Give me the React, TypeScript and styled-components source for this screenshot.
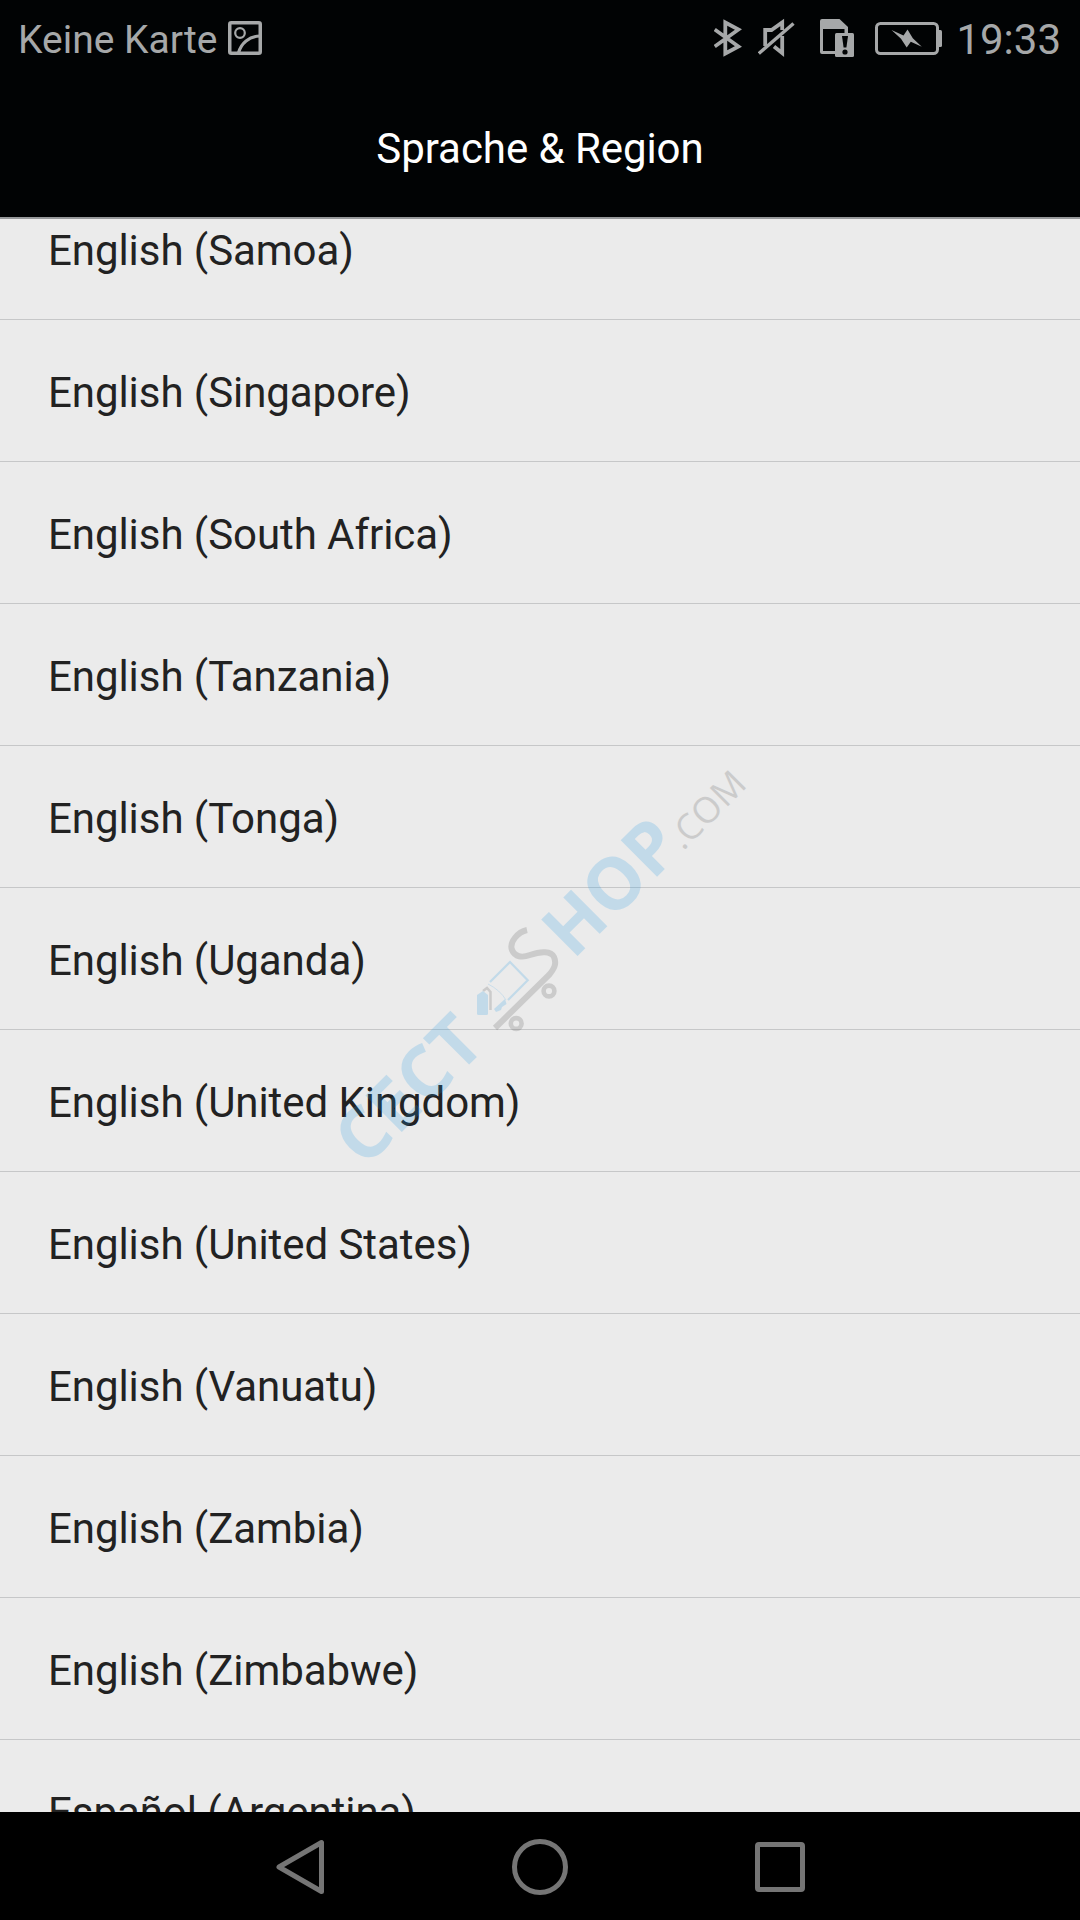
import React from "react";
import styled, { createGlobalStyle } from "styled-components";

const GlobalStyle = createGlobalStyle`
  * { box-sizing: border-box; }
  body { margin: 0; background: #000; }
`;

const Screen = styled.div`
  position: relative;
  display: flex;
  flex-direction: column;
  width: 1080px;
  height: 1920px;
  overflow: hidden;
  background: #000;
  font-family: Roboto, "Noto Sans", sans-serif;
`;

const Header = styled.header`
  display: flex;
  flex-direction: column;
  flex: none;
  height: 219px;
  background: #010304;
  border-bottom: 2px solid #97999b;
`;

const StatusBar = styled.div`
  display: flex;
  align-items: center;
  justify-content: space-between;
  height: 76px;
  padding: 0 18px 0 18px;
  color: #a6a8a9;
`;

const StatusGroup = styled.div`
  display: flex;
  align-items: center;
`;

const Carrier = styled.span`
  font-size: 39px;
  line-height: 76px;
  padding-top: 4px;
  width: 210px;
  white-space: nowrap;
`;

const Clock = styled.span`
  font-size: 42px;
  line-height: 76px;
  padding-top: 4px;
  margin-left: 11px;
  margin-right: 1px;
  width: 108px;
  text-align: right;
  white-space: nowrap;
`;

const StatusIcon = styled.svg<{ $gap?: number }>`
  display: block;
  flex: none;
  margin-left: ${(p) => p.$gap ?? 0}px;
`;

const Title = styled.h1`
  margin: 0;
  padding-top: 4px;
  text-align: center;
  font-size: 42px;
  font-weight: 400;
  letter-spacing: -0.06px;
  line-height: 138px;
  color: #fff;
`;

const List = styled.ul`
  display: flex;
  flex-direction: column;
  justify-content: flex-start;
  flex: none;
  height: 1593px;
  margin: 0;
  padding: 0;
  list-style: none;
  overflow: hidden;
  background: #ebebeb;
`;

const Row = styled.li<{ $scrolled?: boolean }>`
  flex: none;
  height: 142px;
  margin-top: ${(p) => (p.$scrolled ? "-41px" : "0")};
  padding: 2px 48px 0;
  border-bottom: 1px solid #c6c7c8;
  font-size: 42px;
  letter-spacing: -0.06px;
  line-height: 141px;
  color: #222;
  white-space: nowrap;
`;

const NavBar = styled.nav`
  display: flex;
  justify-content: center;
  align-items: center;
  flex: 1;
  gap: 180px;
  padding-top: 2px;
  background: #000;
`;

const NavButton = styled.button`
  display: flex;
  padding: 0;
  border: 0;
  background: none;
`;

const Watermark = styled.svg`
  position: absolute;
  left: 260px;
  top: 700px;
  pointer-events: none;
`;

const languages = [
  "English (Samoa)",
  "English (Singapore)",
  "English (South Africa)",
  "English (Tanzania)",
  "English (Tonga)",
  "English (Uganda)",
  "English (United Kingdom)",
  "English (United States)",
  "English (Vanuatu)",
  "English (Zambia)",
  "English (Zimbabwe)",
  "Español (Argentina)",
];

const PictureIcon = () => (
  <StatusIcon width="34" height="34" viewBox="228 20 34 34" fill="none" stroke="#a6a8a9">
    <rect x="229.75" y="21.75" width="30.5" height="30.5" rx="1.5" strokeWidth="3.5" />
    <circle cx="240" cy="32" r="4.8" strokeWidth="2.2" />
    <path d="M238.5 52C241 42 249 35.5 260 35" strokeWidth="3.2" />
  </StatusIcon>
);

const BluetoothIcon = () => (
  <StatusIcon width="28" height="40" viewBox="714 17 28 40" fill="none" stroke="#a6a8a9" strokeWidth="3.8">
    <path d="M714.7 28.5L738.5 45.5L725.3 52.5V21.5L738.5 28.5L714.7 45.5" />
  </StatusIcon>
);

const MutedIcon = () => (
  <StatusIcon $gap={16} width="37" height="40" viewBox="758 17 37 40" fill="none" stroke="#a6a8a9" strokeWidth="3.8">
    <path d="M765.2 45V29H771.5L782.2 21.5V29" />
    <path d="M782.2 35V52L774 45.5" />
    <path d="M758.8 52.5L793.5 22.5" strokeWidth="3.4" />
  </StatusIcon>
);

const SimAlertIcon = () => (
  <StatusIcon $gap={25} width="34" height="40" viewBox="820 17 34 40">
    <path d="M820 20Q820 18 822 18H839.5L848 26V32H844.5V28H823V50H835V53H822Q820 53 820 51Z" fill="#a6a8a9" />
    <rect x="835" y="32" width="19" height="24" rx="1.5" fill="#a6a8a9" />
    <path d="M842 35H848L846.4 46.5H843.6Z" fill="#010304" />
    <circle cx="845" cy="51" r="2.6" fill="#010304" />
  </StatusIcon>
);

const BatteryIcon = () => (
  <StatusIcon $gap={21} width="67" height="33" viewBox="875 22 67 33">
    <rect x="876.5" y="23.5" width="61" height="30" rx="4" fill="none" stroke="#a6a8a9" strokeWidth="3" />
    <path d="M938 30H940.5Q942 30 942 31.5V45.5Q942 47 940.5 47H938Z" fill="#a6a8a9" />
    <path d="M891.5 30L903.5 35.5L907.5 29.5L912.8 38.3L921.8 46.8L910.8 41.8L906.7 47.5L901 38.8Z" fill="#a6a8a9" />
  </StatusIcon>
);

const BLUE = "#239be6";
const GRAY = "#505050";

const ShopWatermark = () => (
  <Watermark width="560" height="540" viewBox="260 700 560 540">
    <g opacity="0.2" fontFamily="'Open Sans', 'Noto Sans', sans-serif">
      <g transform="rotate(-45)">
        <text x="-568.5" y="1084.5" fontSize="72" fontWeight="700" fill={BLUE}>CECT</text>
        <text x="-274" y="1084.5" fontSize="72" fontWeight="700" fill={BLUE}>HOP</text>
        <text x="-119" y="1085" fontSize="36" fontWeight="400" fill={GRAY}>.COM</text>
      </g>
      <g fill="none" stroke={GRAY}>
        <path
          d="M527 930C518 932 509 942 512 950C515 957 522 958 530 955C541 951 551 951 554 957C557 964 554 969 549 975L495 1028"
          strokeWidth="6"
        />
        <circle cx="549" cy="991" r="5.4" strokeWidth="4.6" />
        <circle cx="516.2" cy="1023.5" r="5.4" strokeWidth="4.6" />
        <path d="M483 991L487 988L490.5 992V1010" strokeWidth="2.5" />
      </g>
      <path d="M490 982L510 962L527.7 980.3L508 1000" fill="none" stroke={BLUE} strokeWidth="2.2" />
      <path d="M488 984Q500 990 506 1000" fill="none" stroke={BLUE} strokeWidth="0.8" />
      <path d="M496 1012L494 1009L505 999L506.5 1004L502 1007L501 1010Z" fill={BLUE} />
      <path d="M477 995L483 991L488 995V1013.5Q488 1015 486.5 1015H478.5Q477 1015 477 1013.5Z" fill={BLUE} />
    </g>
  </Watermark>
);

export default function App() {
  return (
    <Screen>
      <GlobalStyle />
      <Header>
        <StatusBar>
          <StatusGroup>
            <Carrier>Keine Karte</Carrier>
            <PictureIcon />
          </StatusGroup>
          <StatusGroup>
            <BluetoothIcon />
            <MutedIcon />
            <SimAlertIcon />
            <BatteryIcon />
            <Clock>19:33</Clock>
          </StatusGroup>
        </StatusBar>
        <Title>Sprache &amp; Region</Title>
      </Header>
      <List>
        {languages.map((name, i) => (
          <Row key={name} $scrolled={i === 0}>
            {name}
          </Row>
        ))}
      </List>
      <NavBar>
        <NavButton aria-label="Back">
          <svg width="60" height="60" viewBox="270 1837 60 60" fill="none" stroke="#757575" strokeWidth="5" strokeLinejoin="round">
            <path d="M321.5 1842.5V1891.5L279 1867Z" />
          </svg>
        </NavButton>
        <NavButton aria-label="Home">
          <svg width="60" height="60" viewBox="510 1837 60 60" fill="none" stroke="#757575" strokeWidth="5">
            <circle cx="540" cy="1867" r="25.5" />
          </svg>
        </NavButton>
        <NavButton aria-label="Recents">
          <svg width="60" height="60" viewBox="750 1837 60 60" fill="none" stroke="#757575" strokeWidth="5">
            <rect x="757.5" y="1844.5" width="45" height="45" rx="1.5" />
          </svg>
        </NavButton>
      </NavBar>
      <ShopWatermark />
    </Screen>
  );
}
